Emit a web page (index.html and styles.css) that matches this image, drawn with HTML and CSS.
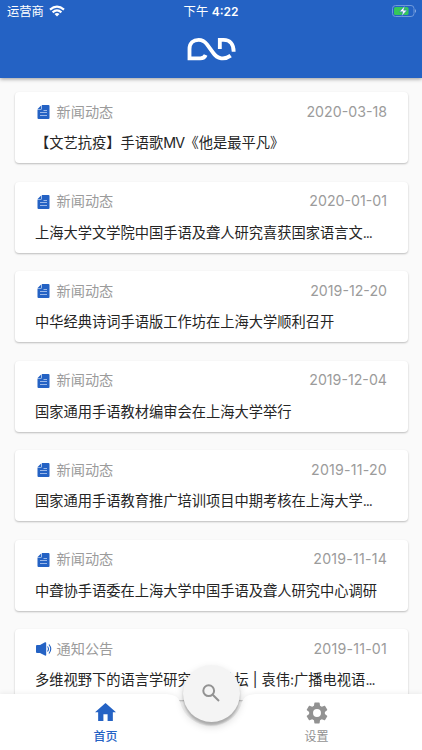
FILE: index.html
```
<!DOCTYPE html>
<html lang="zh-CN">
<head>
<meta charset="utf-8">
<meta name="viewport" content="width=device-width">
<title>新闻动态</title>
<link rel="stylesheet" href="styles.css">
</head>
<body>
<svg class="defs" aria-hidden="true">
  <symbol id="doc" viewBox="0 0 12 14"><path fill="#2462c4" d="M4.500 0H11Q12 0 12 1V13Q12 14 11 14H1Q0 14 0 13V4.600H3.500Q4.500 4.600 4.500 3.600ZM3.900 .2V4H.1Z"/><path stroke="#a9c2ec" stroke-width=".9" d="M6 5.500H9.500M2.500 7.500H9.500M2.500 10.500H9.500"/></symbol>
  <symbol id="horn" viewBox="0 0 16 14"><path fill="#2462c4" d="M1 3H4L9 .3Q10.200 0 10.200 1V13Q10.200 14 9 13.500L4 11H1Q0 11 0 10V4Q0 3 1 3Z"/><path fill="none" stroke="#2462c4" stroke-width="1.1" d="M11.500 4.500Q13.500 7 11.500 9.500M13 2.500Q16.500 7 13 11.500"/></symbol>
</svg>
<div class="app">
  <header class="header">
    <div class="status">
      <div class="carrier">运营商
        <svg width="16" height="12" viewBox="0 0 16 12"><g fill="none" stroke="#fff" stroke-width="2.2"><path d="M1 4.6Q8-1.4 15 4.6M3.6 7.3Q8 3.5 12.4 7.3"/></g><path fill="#fff" d="M5.5 9Q8 7 10.5 9L8 11.5Z"/></svg>
      </div>
      <div class="time">下午 <b>4:22</b></div>
      <svg class="battery" width="25" height="12" viewBox="0 0 25 12"><rect x=".5" y=".5" width="21.5" height="11" rx="3" fill="none" stroke="#6f99db"/><rect x="2" y="2" width="14.5" height="8" rx="1.6" fill="#35c75a"/><path fill="#8caee3" d="M23 4Q25 6 23 8Z"/><path fill="#fff" stroke="#2462c4" stroke-width=".5" d="M12.8 .8L7.5 6.7H10.8L9.6 11.2L15 5.2H11.7Z"/></svg>
    </div>
    <svg class="logo" width="49" height="25" viewBox="141 111 147 75"><g fill="none" stroke="#fff" stroke-width="11.500"><path d="M197 165Q193 175 181 175H148.500V147C148.500 128 160 119.500 176 119.500C188 119.500 194 124 201 133L219 158C232 178 254 180 272 167"/><path d="M239.500 147V119.500H251C270 119.500 281 132 281 155"/></g></svg>
  </header>
  <main class="list">
    <article class="card"><div class="meta"><svg class="doc"><use href="#doc"/></svg><span>新闻动态</span><time>2020-03-18</time></div><h2>【文艺抗疫】手语歌<span class="latin">MV</span>《他是最平凡》</h2></article>
    <article class="card"><div class="meta"><svg class="doc"><use href="#doc"/></svg><span>新闻动态</span><time>2020-01-01</time></div><h2>上海大学文学院中国手语及聋人研究喜获国家语言文<span class="dots">...</span></h2></article>
    <article class="card"><div class="meta"><svg class="doc"><use href="#doc"/></svg><span>新闻动态</span><time>2019-12-20</time></div><h2>中华经典诗词手语版工作坊在上海大学顺利召开</h2></article>
    <article class="card"><div class="meta"><svg class="doc"><use href="#doc"/></svg><span>新闻动态</span><time>2019-12-04</time></div><h2>国家通用手语教材编审会在上海大学举行</h2></article>
    <article class="card"><div class="meta"><svg class="doc"><use href="#doc"/></svg><span>新闻动态</span><time class="narrow">2019-11-20</time></div><h2>国家通用手语教育推广培训项目中期考核在上海大学<span class="dots">...</span></h2></article>
    <article class="card"><div class="meta"><svg class="doc"><use href="#doc"/></svg><span>新闻动态</span><time class="narrow">2019-11-14</time></div><h2>中聋协手语委在上海大学中国手语及聋人研究中心调研</h2></article>
    <article class="card"><div class="meta"><svg class="horn"><use href="#horn"/></svg><span>通知公告</span><time class="narrow">2019-11-01</time></div><h2>多维视野下的语言学研究系列论坛 | 袁伟:广播电视语<span class="dots">...</span></h2></article>
  </main>
  <nav class="nav">
    <svg class="nav-shape" viewBox="0 0 422 64"><path fill="#fff" d="M0 8H163C173 8 178 10 180 16A32 32 0 0 0 242 16C244 10 249 8 259 8H422V64H0Z"/></svg>
    <a class="tab active"><svg width="21" height="18" viewBox="2 3 20 17.500" preserveAspectRatio="none"><path fill="currentColor" d="M10 20.500V14H14V20.500H19V12H22L12 3 2 12H5V20.500Z"/></svg>首页</a>
    <a class="tab"><svg width="22" height="22" viewBox="2 2 20 20"><path fill="currentColor" d="M19.140 12.940c.04-.3.060-.61.060-.94 0-.32-.02-.64-.07-.94l2.030-1.580c.18-.14.230-.41.120-.61l-1.920-3.320c-.12-.22-.37-.29-.59-.22l-2.390.96c-.5-.38-1.030-.7-1.620-.94L14.400 2.810c-.04-.24-.24-.41-.48-.41h-3.840c-.24 0-.43.170-.47.410L9.250 5.350C8.660 5.590 8.120 5.920 7.630 6.290L5.240 5.330c-.22-.08-.47 0-.59.220L2.740 8.870c-.12.210-.08.470.12.610l2.030 1.580C4.840 11.360 4.800 11.690 4.800 12s.02.640.070.940l-2.030 1.580c-.18.140-.23.410-.12.610l1.920 3.320c.12.220.370.290.590.220l2.390-.96c.5.380 1.030.7 1.620.94l.36 2.540c.05.240.240.410.480.410h3.840c.24 0 .44-.17.470-.41l.36-2.540c.59-.24 1.130-.56 1.620-.94l2.390.96c.22.080.470 0 .59-.22l1.920-3.320c.12-.22.070-.47-.12-.61ZM12 15.600A3.600 3.600 0 1 1 12 8.400A3.600 3.600 0 0 1 12 15.600Z"/></svg>设置</a>
    <div class="fab"><svg width="18" height="18" viewBox="0 0 18 18"><g fill="none" stroke="#929292" stroke-width="2"><circle cx="6.700" cy="6.700" r="5.400"/><path d="M10.700 10.700L17 17"/></g></svg></div>
  </nav>
</div>
</body>
</html>
```
FILE: styles.css
```
* { box-sizing: border-box; }
body { margin: 0; font-family: Inter, "Noto Sans CJK SC", sans-serif; }
.defs { position: absolute; width: 0; height: 0; }
svg { display: block; flex: none; }
.app { position: relative; width: 422px; height: 750px; overflow: hidden; background: #fafafa; }
.header { position: relative; height: 78px; background: #2462c4; box-shadow: 0 1px 4px rgba(0,0,0,.4); color: #fff; }
.status { display: grid; grid-template-columns: 1fr auto 1fr; height: 22px; align-items: center; padding: 0 5px 0 7px; font-size: 12.3px; }
.carrier { display: flex; align-items: center; gap: 5px; }
.time { margin-right: 2px; }
.time b { font-weight: 600; font-size: 12px; }
.battery { justify-self: end; }
.logo { margin: 15px auto 0; }
.list { display: grid; gap: 18.500px; padding: 14px 14px 0 14.500px; }
.card { height: 71px; padding: 10px 21px 0; background: #fff; border-radius: 4px; box-shadow: 0 1px 2px rgba(0,0,0,.25); }
.meta { display: flex; align-items: center; height: 20px; font-size: 14.200px; line-height: 20px; color: #9b9b9b; }
.meta span { margin-top: -.4px; }
.doc { width: 13px; height: 14px; margin-left: 1px; }
.horn { width: 16px; height: 14px; }
.meta .doc + span { margin-left: 7px; }
.meta .horn + span { margin-left: 5px; }
time { margin-left: auto; margin-top: -.4px; }
.narrow { letter-spacing: .2px; }
h2 { margin: 11px -10px 0 -.5px; height: 20px; line-height: 20px; font-size: 14.250px; font-weight: 400; color: #252525; white-space: nowrap; }
.latin { letter-spacing: -.8px; }
.dots { letter-spacing: -1.1px; }
.nav { position: absolute; left: 0; right: 0; bottom: 0; height: 57px; display: flex; }
.nav-shape { position: absolute; left: 0; bottom: 0; width: 422px; height: 64px; filter: drop-shadow(0 -1px 2px rgba(0,0,0,.06)); }
.tab { position: relative; flex: 1; display: flex; flex-direction: column; align-items: center; justify-content: flex-end; gap: 4px; padding-bottom: 4.500px; font-size: 12px; line-height: 18px; color: #929292; }
.active { color: #2462c4; font-weight: 500; gap: 7px; }
.fab { position: absolute; left: 182.500px; top: -28.500px; width: 57px; height: 57px; border-radius: 50%; background: #f4f4f4; display: grid; place-items: center; box-shadow: 0 3px 2px rgba(0,0,0,.2), 0 4px 9px rgba(0,0,0,.18); }
```
